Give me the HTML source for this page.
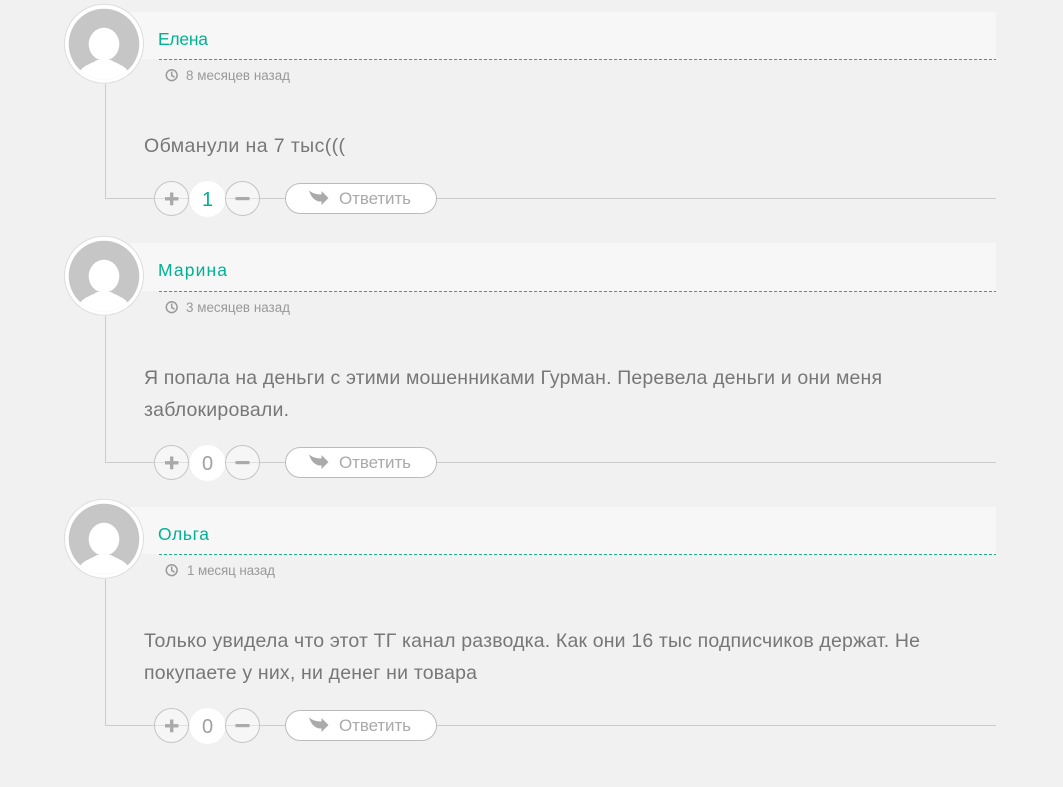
<!DOCTYPE html>
<html lang="ru">
<head>
<meta charset="utf-8">
<title>Комментарии</title>
<style>
html,body{margin:0;padding:0;background:#f1f1f1;width:1063px;height:787px;overflow:hidden}
svg{display:block}
text{font-family:"Liberation Sans","DejaVu Sans",sans-serif}
.n{font-size:17.500px;fill:#00b294}
.d{font-size:13.400px;fill:#999}
.b{font-size:19.500px;fill:#777}
.r{font-size:17px;fill:#aaa}
.v{font-size:20px;fill:#a0a0a0;text-anchor:middle}
.ln{stroke:#ccc;stroke-width:1;fill:none}
.ic{fill:#aaa}
.cb{fill:#fff;fill-opacity:.4;stroke:#c4c4c4;stroke-width:1}
.ck{fill:none;stroke:#999;stroke-width:1.5}
.ds{stroke:#1fa98d;stroke-width:1;stroke-dasharray:3 2;fill:none}
</style>
</head>
<body>
<svg width="1063" height="787" viewBox="0 0 1063 787" xmlns="http://www.w3.org/2000/svg">
<defs>
<clipPath id="cp"><circle cx="104" cy="44" r="35.300"/></clipPath>
</defs>
<rect width="1063" height="787" fill="#f1f1f1"/>

<!-- Comment 1 -->
<g>
<rect x="130" y="12" width="866" height="47" fill="#f7f7f7"/>
<path class="ds" d="M159 59.500H996"/>
<path class="ln" d="M105.500 84V198.500H996"/>
<circle cx="104" cy="43.700" r="39.500" fill="#fff" stroke="#ddd"/>
<circle cx="104" cy="44" r="35.300" fill="#c6c6c6"/>
<g clip-path="url(#cp)" fill="#fff"><ellipse cx="104" cy="44.200" rx="15.300" ry="16.400"/><path d="M80 71C84 65 92 63.500 97 60H111C116 63.500 124 65 128 71L130 82H78Z"/></g>
<text class="n" x="158" y="45" textLength="50" lengthAdjust="spacing">Елена</text>
<circle class="ck" cx="171.700" cy="75.200" r="5.400"/><path class="ck" d="M171.700 71.500V75.500L174.500 77.200"/>
<text class="d" x="186" y="80" textLength="104" lengthAdjust="spacing">8 месяцев назад</text>
<text class="b" x="144" y="152" textLength="201" lengthAdjust="spacing">Обманули на 7 тыс(((</text>
<circle class="cb" cx="171.500" cy="198.500" r="17"/>
<path class="ic" d="M170 192.500h3.400v4.600h5v3.400h-5v4.800h-3.400v-4.800h-5v-3.400h5z"/>
<circle cx="207.500" cy="199" r="18" fill="#fff"/>
<text class="v" x="207.500" y="206" style="fill:#00b294">1</text>
<circle class="cb" cx="242.500" cy="198.500" r="17"/>
<rect class="ic" x="235.500" y="197" width="14" height="3.200"/>
<rect x="285.500" y="183.500" width="151" height="30" rx="15" fill="#fff" stroke="#bbb"/>
<path class="ic" d="M309 190.500C312 193 316 194.500 321.500 194.500V191L328.500 198L321.500 205V201.500C315 202 311 197 309 190.500Z"/>
<text class="r" x="339" y="204" textLength="72" lengthAdjust="spacing">Ответить</text>
</g>

<!-- Comment 2 -->
<g transform="translate(0 232)">
<rect x="130" y="11" width="866" height="48" fill="#f7f7f7"/>
<path class="ds" d="M159 59.500H996"/>
<path class="ln" d="M105.500 84V230.500H996"/>
<circle cx="104" cy="43.700" r="39.500" fill="#fff" stroke="#ddd"/>
<circle cx="104" cy="44" r="35.300" fill="#c6c6c6"/>
<g clip-path="url(#cp)" fill="#fff"><ellipse cx="104" cy="44.200" rx="15.300" ry="16.400"/><path d="M80 71C84 65 92 63.500 97 60H111C116 63.500 124 65 128 71L130 82H78Z"/></g>
<text class="n" x="158" y="44" textLength="69" lengthAdjust="spacing">Марина</text>
<circle class="ck" cx="171.700" cy="75.200" r="5.400"/><path class="ck" d="M171.700 71.500V75.500L174.500 77.200"/>
<text class="d" x="186" y="80" textLength="104" lengthAdjust="spacing">3 месяцев назад</text>
<text class="b" x="144" y="152" textLength="738" lengthAdjust="spacing">Я попала на деньги с этими мошенниками Гурман. Перевела деньги и они меня</text>
<text class="b" x="144" y="184" textLength="145" lengthAdjust="spacing">заблокировали.</text>
<g transform="translate(0 32)">
<circle class="cb" cx="171.500" cy="198.500" r="17"/>
<path class="ic" d="M170 192.500h3.400v4.600h5v3.400h-5v4.800h-3.400v-4.800h-5v-3.400h5z"/>
<circle cx="207.500" cy="199" r="18" fill="#fff"/>
<text class="v" x="207.500" y="206">0</text>
<circle class="cb" cx="242.500" cy="198.500" r="17"/>
<rect class="ic" x="235.500" y="197" width="14" height="3.200"/>
<rect x="285.500" y="183.500" width="151" height="30" rx="15" fill="#fff" stroke="#bbb"/>
<path class="ic" d="M309 190.500C312 193 316 194.500 321.500 194.500V191L328.500 198L321.500 205V201.500C315 202 311 197 309 190.500Z"/>
<text class="r" x="339" y="204" textLength="72" lengthAdjust="spacing">Ответить</text>
</g>
</g>

<!-- Comment 3 -->
<g transform="translate(0 495)">
<rect x="130" y="12" width="866" height="47" fill="#f7f7f7"/>
<path class="ds" d="M159 59.500H996"/>
<path class="ln" d="M105.500 84V230.500H996"/>
<circle cx="104" cy="43.700" r="39.500" fill="#fff" stroke="#ddd"/>
<circle cx="104" cy="44" r="35.300" fill="#c6c6c6"/>
<g clip-path="url(#cp)" fill="#fff"><ellipse cx="104" cy="44.200" rx="15.300" ry="16.400"/><path d="M80 71C84 65 92 63.500 97 60H111C116 63.500 124 65 128 71L130 82H78Z"/></g>
<text class="n" x="158" y="45" textLength="51" lengthAdjust="spacing">Ольга</text>
<circle class="ck" cx="171.700" cy="75.200" r="5.400"/><path class="ck" d="M171.700 71.500V75.500L174.500 77.200"/>
<text class="d" x="187" y="80" textLength="88" lengthAdjust="spacing">1 месяц назад</text>
<text class="b" x="144" y="152" textLength="776" lengthAdjust="spacing">Только увидела что этот ТГ канал разводка. Как они 16 тыс подписчиков держат. Не</text>
<text class="b" x="144" y="184" textLength="333" lengthAdjust="spacing">покупаете у них, ни денег ни товара</text>
<g transform="translate(0 32)">
<circle class="cb" cx="171.500" cy="198.500" r="17"/>
<path class="ic" d="M170 192.500h3.400v4.600h5v3.400h-5v4.800h-3.400v-4.800h-5v-3.400h5z"/>
<circle cx="207.500" cy="199" r="18" fill="#fff"/>
<text class="v" x="207.500" y="206">0</text>
<circle class="cb" cx="242.500" cy="198.500" r="17"/>
<rect class="ic" x="235.500" y="197" width="14" height="3.200"/>
<rect x="285.500" y="183.500" width="151" height="30" rx="15" fill="#fff" stroke="#bbb"/>
<path class="ic" d="M309 190.500C312 193 316 194.500 321.500 194.500V191L328.500 198L321.500 205V201.500C315 202 311 197 309 190.500Z"/>
<text class="r" x="339" y="204" textLength="72" lengthAdjust="spacing">Ответить</text>
</g>
</g>
</svg>
</body>
</html>
